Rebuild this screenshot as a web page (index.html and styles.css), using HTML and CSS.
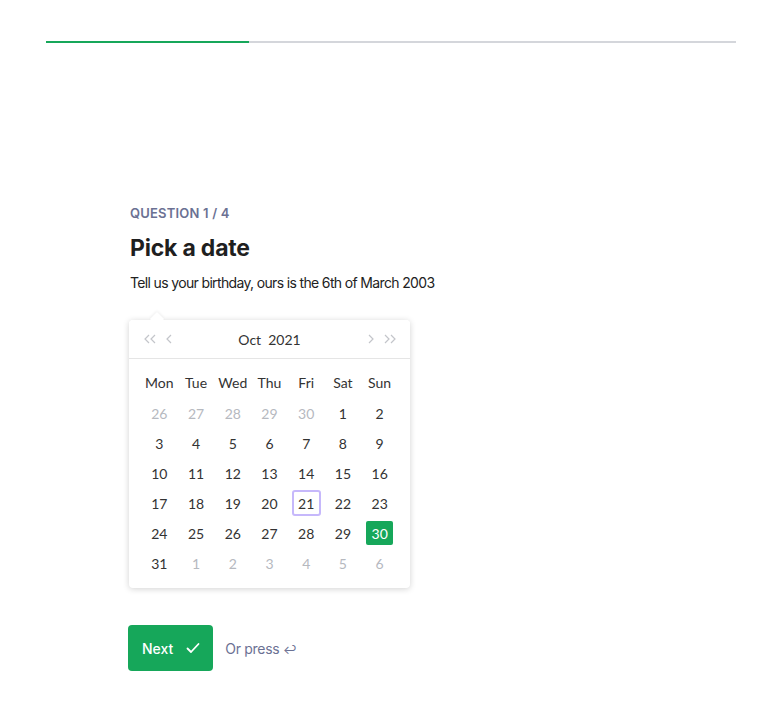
FILE: index.html
```html
<!DOCTYPE html>
<html lang="en">

<head>
    <meta charset="UTF-8">
    <meta name="viewport" content="width=device-width, initial-scale=1.0">
    <title>Pick a date</title>
    <link rel="stylesheet" href="styles.css">
</head>

<body>
    <div class="progress">
        <div class="progress-fill"></div>
    </div>

    <div class="question">
        <div class="counter">QUESTION 1 / 4</div>
        <h1>Pick a date</h1>
        <p class="desc">Tell us your birthday, ours is the 6th of March 2003</p>

        <div class="picker">
            <div class="picker-head">
                <div class="nav">
                    <svg width="14" height="10" viewBox="0 0 14 10"><path d="M6 1L2 5l4 4M12 1L8 5l4 4"/></svg>
                    <svg width="6" height="10" viewBox="0 0 6 10"><path d="M5 1L1 5l4 4"/></svg>
                </div>
                <div class="title">Oct&nbsp;&nbsp;2021</div>
                <div class="nav">
                    <svg width="6" height="10" viewBox="0 0 6 10"><path d="M1 1l4 4-4 4"/></svg>
                    <svg width="14" height="10" viewBox="0 0 14 10"><path d="M2 1l4 4-4 4M8 1l4 4-4 4"/></svg>
                </div>
            </div>
            <div class="picker-body">
                <div class="week">
                    <span>Mon</span><span>Tue</span><span>Wed</span><span>Thu</span><span>Fri</span><span>Sat</span><span>Sun</span>
                </div>
                <div class="days">
                    <span class="other">26</span><span class="other">27</span><span class="other">28</span><span class="other">29</span><span class="other">30</span><span>1</span><span>2</span>
                    <span>3</span><span>4</span><span>5</span><span>6</span><span>7</span><span>8</span><span>9</span>
                    <span>10</span><span>11</span><span>12</span><span>13</span><span>14</span><span>15</span><span>16</span>
                    <span>17</span><span>18</span><span>19</span><span>20</span><span class="today">21</span><span>22</span><span>23</span>
                    <span>24</span><span>25</span><span>26</span><span>27</span><span>28</span><span>29</span><span class="selected">30</span>
                    <span>31</span><span class="other">1</span><span class="other">2</span><span class="other">3</span><span class="other">4</span><span class="other">5</span><span class="other">6</span>
                </div>
            </div>
        </div>

        <div class="actions">
            <button class="next">Next
                <svg width="16" height="16" viewBox="0 0 16 16" fill="none" stroke="white" stroke-width="1.8" stroke-linecap="round" stroke-linejoin="round">
                    <path d="M2.5 8.5l3.5 3.5 7.5-8"/>
                </svg>
            </button>
            <span class="hint">Or press <span class="key">&#8617;</span></span>
        </div>
    </div>
</body>

</html>
```

FILE: styles.css
```css
body {
    margin: 0;
    font-family: "Inter", "Noto Sans", sans-serif;
    color: #1f1f1f;
    background: #fff;
}

.progress {
    margin: 41px 45px 0 46px;
    height: 2px;
    background: #d4d6db;
}

.progress-fill {
    width: 203px;
    height: 2px;
    background: #16a75a;
}

.question {
    margin: 162px 0 0 130px;
}

.counter {
    font-size: 13px;
    font-weight: 600;
    color: #6b7193;
    letter-spacing: 0.2px;
    line-height: 16px;
}

h1 {
    margin: 12px 0 0;
    font-size: 23px;
    font-weight: 700;
    line-height: 30px;
    letter-spacing: -0.2px;
}

.desc {
    margin: 11px 0 0;
    font-size: 14px;
    line-height: 18px;
    color: #222;
    letter-spacing: -0.65px;
}

.picker {
    position: relative;
    margin: 28px 0 0 -1px;
    width: 281px;
    background: #fff;
    border-radius: 4px;
    box-shadow: 0 1px 6px rgba(0, 0, 0, 0.18);
    font-family: "Lato", sans-serif;
    color: #333;
}

.picker::before {
    content: "";
    position: absolute;
    top: -6px;
    left: 23px;
    width: 10px;
    height: 10px;
    background: #fff;
    transform: rotate(45deg);
    box-shadow: -1px -1px 3px rgba(0, 0, 0, 0.06);
}

.picker-head {
    position: relative;
    display: flex;
    align-items: center;
    justify-content: space-between;
    height: 38px;
    padding: 0 13px 0 14px;
    border-bottom: 1px solid #e5e5e5;
    background: #fff;
    border-radius: 4px 4px 0 0;
}

.nav {
    display: flex;
    align-items: center;
    gap: 9px;
}

.nav svg path {
    fill: none;
    stroke: #c3c5ca;
    stroke-width: 1.2;
}

.title {
    font-size: 14px;
    color: #333;
    margin-left: -1px;
}

.picker-body {
    padding: 13px 12px 10px;
}

.week,
.days {
    display: grid;
    grid-template-columns: repeat(7, 1fr);
    text-align: center;
}

.week span {
    font-size: 14px;
    line-height: 22px;
    color: #333;
}

.days {
    margin-top: 4px;
}

.days span {
    display: flex;
    align-items: center;
    justify-content: center;
    height: 30px;
    font-size: 14px;
    color: #333;
}

.days .other {
    color: #b6b9bf;
}

.days .today {
    margin: 2px 4px;
    height: 22px;
    border: 2px solid #c6b8fb;
    border-radius: 3px;
}

.days .selected {
    margin: 3px 5px;
    height: 24px;
    background: #16a75a;
    color: #fff;
    border-radius: 2px;
}

.actions {
    display: flex;
    align-items: center;
    margin: 37px 0 0 -2px;
}

.next {
    display: flex;
    align-items: center;
    gap: 12px;
    height: 46px;
    padding: 0 12px 0 14px;
    border: none;
    border-radius: 4px;
    background: #16a75a;
    color: #fff;
    font-family: "Inter", "Noto Sans", sans-serif;
    font-size: 14px;
    font-weight: 500;
    cursor: pointer;
}

.hint {
    margin-left: 12px;
    font-size: 14px;
    color: #6b7193;
    letter-spacing: -0.3px;
}

.key {
    font-size: 12px;
}
```
